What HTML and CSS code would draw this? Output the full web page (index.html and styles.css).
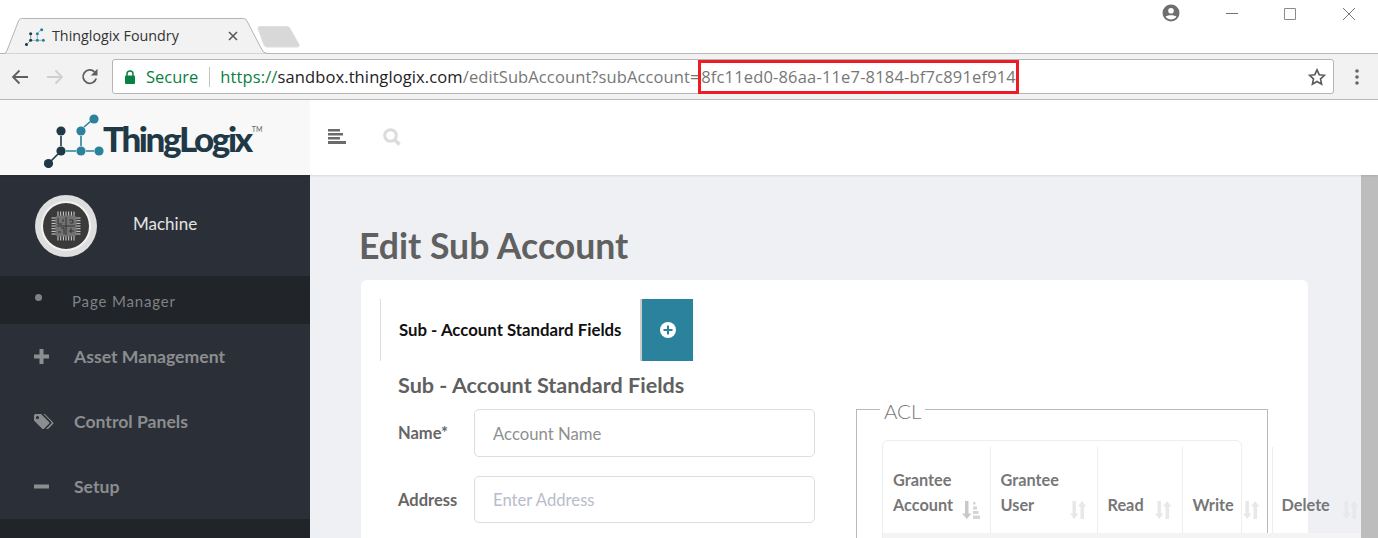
FILE: index.html
```html
<!DOCTYPE html>
<html lang="en">
<head>
<meta charset="utf-8">
<title>Thinglogix Foundry</title>
<link rel="stylesheet" href="styles.css">
</head>
<body>
<svg class="defs" width="0" height="0" aria-hidden="true">
  <defs>
    <symbol id="sort" viewBox="0 0 18 18">
      <path d="M3.500 0h3.500v12.500h2.500L5.200 18 1 12.500h2.500zM13 0l4.500 5.500H15V18h-3.500V5.500H9z"/>
    </symbol>
    <symbol id="sort-active" viewBox="0 0 18 18">
      <path class="sort-arrow" d="M3 0h3.500v12.500H9.500L4.800 18 0 12.500h3z"/>
      <path class="sort-bars" d="M11 1h2.500v2.500H11zM11 5.500h4v3h-4zM11 10h5.500v3H11zM11 14.500h7V18h-7z"/>
    </symbol>
    <symbol id="mark" viewBox="0 0 60 54">
      <g fill="none" stroke-width="1.600">
        <path stroke="#1f3a46" d="M17 22v10M14 40 7 47"/>
        <path stroke="#2a829c" d="M22 37h10M42 37h8M40 13l7-6M37 22v10"/>
      </g>
      <g fill="#1f3a46"><circle cx="17" cy="17" r="4.600"/><circle cx="17" cy="37" r="4.600"/><circle cx="4.500" cy="49.500" r="4.600"/></g>
      <g fill="#2a829c"><circle cx="37" cy="17" r="4.600"/><circle cx="50" cy="5" r="4.600"/><circle cx="37" cy="37" r="4.600"/><circle cx="55" cy="37" r="4.600"/></g>
    </symbol>
  </defs>
</svg>

<div class="tabstrip">
  <div class="tab">
    <svg class="tab-shape" width="268" height="36" viewBox="0 0 268 36"><path d="M0 35.500h4q2 0 3-3L18.500 3q1-2.500 3-2.500h222q2.500 0 3.500 2.500L261 30q2 5.500 6 5.500" fill="#f2f2f2" stroke="#b4b4b4"/></svg>
    <svg class="tab-icon" width="20" height="20"><use href="#mark"/></svg>
    <span class="tab-title">Thinglogix Foundry</span>
    <svg class="tab-close" width="10" height="10" viewBox="0 0 10 10"><path d="M1 1l8 8M9 1l-8 8" stroke="#5a5a5a" stroke-width="1.600"/></svg>
  </div>
  <svg class="newtab" width="44" height="22" viewBox="0 0 44 22"><path d="M1 2.500Q.5.500 3 .500h27q2 0 3 2l9 16q1 2.500-2 2.500H10q-2 0-3-2z" fill="#d8d8d8" stroke="#dedede"/></svg>
  <div class="window-controls">
    <svg class="profile" width="18" height="18" viewBox="0 0 18 18"><circle cx="9" cy="9" r="8.500" fill="#6e6e6e"/><circle cx="9" cy="6.700" r="2.800" fill="#fff"/><path d="M3.600 12.800C5 10.800 13 10.800 14.400 12.800 13 14.800 11 15.500 9 15.500S5 14.800 3.600 12.800z" fill="#fff"/></svg>
    <svg width="12" height="12" class="win-min" viewBox="0 0 12 12"><path d="M0 5.500h12" stroke="#707070"/></svg>
    <svg width="12" height="12" class="win-max" viewBox="0 0 12 12"><path d="M.5.500h11v11H.5z" fill="none" stroke="#8a8a8a"/></svg>
    <svg width="12" height="12" class="win-close" viewBox="0 0 12 12"><path d="M0 0l12 12M12 0L0 12" stroke="#777"/></svg>
  </div>
</div>

<div class="toolbar">
  <svg class="nav-icon" width="18" height="16" viewBox="0 0 18 16"><path d="M17 8H2M8.500 1.500 2 8l6.500 6.500" fill="none" stroke="#5f5f5f" stroke-width="1.800"/></svg>
  <svg class="nav-icon" width="18" height="16" viewBox="0 0 18 16"><path d="M1 8h15M9.500 1.500 16 8l-6.500 6.500" fill="none" stroke="#cfcfcf" stroke-width="1.800"/></svg>
  <svg class="nav-icon" width="18" height="18" viewBox="0 0 18 18"><path d="M15.200 10.500A6.700 6.700 0 1 1 13.500 3.800" fill="none" stroke="#5f5f5f" stroke-width="1.800"/><path d="M16.500.8v6.700H9.800z" fill="#5f5f5f"/></svg>
  <div class="omnibox">
    <svg class="lock" width="12" height="14" viewBox="0 0 12 14"><path d="M3 6V4a3 3 0 0 1 6 0v2" fill="none" stroke="#0b8043" stroke-width="1.500"/><rect x="1" y="5.500" width="10" height="8.500" rx="1" fill="#0b8043"/></svg>
    <span class="secure">Secure</span>
    <span class="omni-sep"></span>
    <span class="url"><span class="url-scheme">https://</span><span class="url-host">sandbox.thinglogix.com</span><span class="url-path">/editSubAccount?subAccount=</span><span class="url-id">8fc11ed0-86aa-11e7-8184-bf7c891ef914</span></span>
    <svg class="star" width="18" height="18" viewBox="0 0 18 18"><path d="M9 1.800l2.200 4.900 5.300.6-4 3.600 1.100 5.300L9 13.500l-4.600 2.700 1.100-5.300-4-3.600 5.300-.6z" fill="none" stroke="#5a5a5a" stroke-width="1.600"/></svg>
  </div>
  <svg class="kebab" width="4" height="16" viewBox="0 0 4 16"><circle cx="2" cy="2" r="1.800" fill="#666"/><circle cx="2" cy="8" r="1.800" fill="#666"/><circle cx="2" cy="14" r="1.800" fill="#666"/></svg>
</div>

<header class="app-header">
  <div class="brand">
    <svg class="brand-mark" width="60" height="54"><use href="#mark"/></svg>
    <span class="brand-name">ThingLogix</span><span class="brand-tm">TM</span>
  </div>
  <div class="header-tools">
    <svg width="18" height="15" viewBox="0 0 18 15"><path d="M0 0h12v2.500H0zM0 4h15v2.500H0zM0 8h12v2.500H0zM0 12h18v3H0z" fill="#6b6b6b"/></svg>
    <svg width="18" height="18" viewBox="0 0 18 18"><circle cx="7.500" cy="7.500" r="5.800" fill="none" stroke="#dcdcdc" stroke-width="3"/><path d="M11.500 11.500 16.500 16.500" stroke="#dcdcdc" stroke-width="3.400"/></svg>
  </div>
</header>

<div class="app-main">
  <aside class="sidebar">
    <div class="profile-row">
      <svg class="avatar" width="62" height="62" viewBox="0 0 62 62">
        <circle cx="31" cy="31" r="31" fill="#dedede"/>
        <circle cx="31" cy="31" r="24" fill="#3a3a3b" stroke="#f2f2f2" stroke-width="2"/>
        <g stroke="#e4e4e4" stroke-width=".9">
          <path d="M23 16.500v29M25.700 16.500v29M28.400 16.500v29M31 16.500v29M33.700 16.500v29M36.400 16.500v29M39 16.500v29M16.500 23h29M16.500 25.700h29M16.500 28.400h29M16.500 31h29M16.500 33.700h29M16.500 36.400h29M16.500 39h29"/>
        </g>
        <rect x="20.500" y="20.500" width="21" height="21" rx="3" fill="#727272"/>
        <path d="M23 23v6h4M26 33h3v6M31 22v18M22 31h18M34 25h4v3h-3M34 36h5M36 33v5M23 37h3M28 24v3" fill="none" stroke="#2e2e2e" stroke-width=".9"/>
      </svg>
      <span class="profile-name">Machine</span>
    </div>
    <a class="sub-item"><span class="bullet"></span><span class="sub-label">Page Manager</span></a>
    <a class="nav-item">
      <svg class="nav-glyph" width="15" height="15" viewBox="0 0 15 15"><path d="M5.500 0h4v5.500H15v4H9.500V15h-4V9.500H0v-4h5.500z" fill="#8c8d8f"/></svg>
      <span>Asset Management</span>
    </a>
    <a class="nav-item">
      <svg class="nav-glyph tags" width="20" height="15" viewBox="0 0 20 15"><path d="M0 1.500Q0 0 1.500 0H7l8 8q.8.900 0 1.800l-5 5q-.9.800-1.800 0L0 6.500zM3.500 2A1.600 1.600 0 1 0 3.500 5.200 1.600 1.600 0 0 0 3.500 2z" fill="#8c8d8f" fill-rule="evenodd"/><path d="M9.500 0h1.300l8.200 8.300q.8.900 0 1.700l-5 5h-2l5.300-5.400q.7-.7 0-1.500z" fill="#8c8d8f"/></svg>
      <span>Control Panels</span>
    </a>
    <a class="nav-item">
      <svg class="nav-glyph" width="15" height="15" viewBox="0 0 15 15"><path d="M0 5.500h15v4H0z" fill="#8c8d8f"/></svg>
      <span>Setup</span>
    </a>
    <div class="sidebar-rest"></div>
  </aside>

  <main class="content">
    <h1 class="page-title">Edit Sub Account</h1>
    <section class="card">
      <div class="tabs">
        <div class="tabs-item">Sub - Account Standard Fields</div>
        <div class="tabs-add">
          <svg width="16" height="16" viewBox="0 0 16 16"><circle cx="8" cy="8" r="8" fill="#fff"/><path d="M7 3.500h2V7h3.500v2H9v3.500H7V9H3.500V7H7z" fill="#2a829c"/></svg>
        </div>
      </div>
      <div class="section">
        <h2 class="section-title">Sub - Account Standard Fields</h2>
        <div class="columns">
          <form class="form">
            <div class="field field-name">
              <label class="field-label">Name*</label>
              <input class="field-input input-name" placeholder="Account Name">
            </div>
            <div class="field field-address">
              <label class="field-label">Address</label>
              <input class="field-input input-address" placeholder="Enter Address">
            </div>
          </form>
          <fieldset class="acl">
            <legend class="acl-legend">ACL</legend>
            <div class="acl-box">
              <table class="acl-table">
                <thead>
                  <tr>
                    <th class="col-account"><div class="th-inner"><span>Grantee<br>Account</span><svg class="sort-icon" width="18" height="18"><use href="#sort-active"/></svg></div></th>
                    <th class="col-user"><div class="th-inner"><span>Grantee<br>User</span><svg class="sort-icon" width="18" height="18"><use href="#sort"/></svg></div></th>
                    <th class="col-read"><div class="th-inner"><span>Read</span><svg class="sort-icon" width="18" height="18"><use href="#sort"/></svg></div></th>
                    <th class="col-write"><div class="th-inner"><span>Write</span><svg class="sort-icon" width="18" height="18"><use href="#sort"/></svg></div></th>
                    <th class="col-delete"><div class="th-inner"><span>Delete</span><svg class="sort-icon" width="18" height="18"><use href="#sort"/></svg></div></th>
                  </tr>
                </thead>
              </table>
            </div>
          </fieldset>
        </div>
      </div>
    </section>
  </main>
  <div class="scrollbar"></div>
</div>
</body>
</html>
```

FILE: styles.css
```css
* { box-sizing: border-box; }
html, body { margin: 0; height: 538px; overflow: hidden; background: #fff; }
body { font-family: "Lato", "Noto Sans", sans-serif; display: flex; flex-direction: column; }
.defs { position: absolute; }

/* browser chrome */
.tabstrip { height: 54px; flex: none; display: flex; align-items: flex-start; border-bottom: 1px solid #b9b9b9; position: relative; }
.tab { width: 268px; height: 36px; margin-top: 18px; position: relative; display: flex; align-items: center; padding: 0 30px 0 25px; z-index: 1; }
.tab-shape { position: absolute; left: 0; top: 0; }
.tab-icon, .tab-title, .tab-close { position: relative; }
.tab-icon { flex: none; margin-top: 1px; }
.tab-title { font-family: "Open Sans", sans-serif; font-size: 14.300px; line-height: 18px; padding-bottom: 1px; color: #333; margin-left: 7px; flex: 1; white-space: nowrap; }
.tab-close { flex: none; }
.newtab { flex: none; margin: 26px 0 0 -11px; }
.window-controls { margin-left: auto; display: flex; align-items: flex-start; padding: 4px 23px 0 0; }
.profile { margin-right: 46px; }
.win-min, .win-max, .win-close { margin-top: 4px; }
.win-max { margin: 4px 47px 0 46px; }

.toolbar { height: 46px; flex: none; background: #f2f2f2; border-bottom: 1px solid #b9b9b9; display: flex; align-items: center; padding: 0 19px 0 11px; }
.nav-icon { flex: none; margin-right: 17px; }
.nav-icon:nth-child(3) { margin-right: 13px; }
.omnibox { flex: 1; height: 35px; margin-right: 21px; background: #fff; border: 1px solid #b5b5b5; border-radius: 3px; display: flex; align-items: center; padding: 0 7px 0 11px; font-family: "Open Sans", sans-serif; font-size: 16.500px; white-space: nowrap; }
.lock { flex: none; margin-right: 10px; }
.secure { color: #0b8043; }
.omni-sep { width: 1px; height: 20px; background: #c4c4c4; margin: 0 10px 0 11px; }
.url { flex: 1; display: flex; align-items: center; color: #777; letter-spacing: .11px; }
.url-scheme { color: #0b8043; }
.url-host { color: #222; }
.url-id { height: 34px; line-height: 28px; border: 3px solid #ed1c24; margin-left: -2px; padding: 0 0 0 .5px; letter-spacing: .17px; }
.star { flex: none; }
.kebab { flex: none; }

/* app */
.app-header { height: 75px; flex: none; display: flex; background: #fff; box-shadow: 0 1px 2px rgba(0,0,0,.1); position: relative; z-index: 1; }
.brand { width: 310px; background: #f8f8f8; display: flex; align-items: flex-start; padding: 14px 0 0 44px; }
.brand-mark { flex: none; }
.brand-name { font-size: 35px; font-weight: 900; letter-spacing: -2.400px; color: #1f3a46; line-height: 46px; margin: 1px 0 0 -1px; }
.brand-tm { font-size: 7px; color: #666; margin: 11px 0 0 1px; }
.header-tools { display: flex; align-items: center; gap: 37px; padding-left: 18px; margin-top: -1px; height: 75px; }

.app-main { flex: 1; min-height: 0; display: flex; overflow: hidden; }
.sidebar { width: 310px; flex: none; background: #2b3038; display: flex; flex-direction: column; }
.profile-row { height: 101px; display: flex; align-items: center; padding: 0 0 0 35px; }
.avatar { flex: none; }
.profile-name { color: #e4e4e4; font-size: 17px; margin: -5px 0 0 36px; }
.sub-item { height: 48px; background: #212428; display: flex; align-items: center; color: #808285; font-size: 15px; letter-spacing: .85px; padding-left: 35px; }
.sub-label { padding-top: 2px; }
.bullet { width: 7px; height: 7px; border-radius: 50%; background: #808285; margin: -6px 30px 0 0; }
.nav-item { height: 65px; display: flex; align-items: center; font-size: 17.600px; font-weight: 700; color: #8c8d8f; padding-left: 34px; flex: none; }
.nav-glyph { flex: none; margin-right: 25px; }
.nav-glyph.tags { margin-right: 20px; }
.sidebar-rest { flex: 1; background: #212428; }

.content { flex: 1; min-width: 0; background: #eef0f4; padding: 0 0 0 49px; overflow: hidden; }
.page-title { margin: 50px 0 0; font-size: 35.600px; line-height: 42px; font-weight: 700; color: #606060; }
.card { margin: 13px 0 0 2px; width: 947px; height: 400px; background: #fff; border-radius: 6px; padding: 19px 0 0 19px; }
.tabs { display: flex; height: 62px; }
.tabs-item { width: 260px; border-left: 1px solid #ddd; display: flex; align-items: center; padding: 0 0 2px 18px; font-size: 16.800px; font-weight: 700; color: #111; }
.tabs-add { width: 53px; background: #2a829c; border-left: 2px solid #ccc; display: flex; align-items: center; justify-content: center; }
.section { padding: 0 0 0 18px; }
.section-title { margin: 10px 0 0; font-size: 21.600px; line-height: 28px; font-weight: 700; color: #606060; }
.columns { display: flex; margin-top: 10px; }
.form { width: 417px; flex: none; }
.field { display: flex; }
.field-address { margin-top: 19px; align-items: center; }
.field-label { width: 76px; font-size: 16.500px; font-weight: 700; color: #666; flex: none; }
.field-name .field-label { padding-top: 14px; }
.field-input { width: 341px; height: 48px; border: 1px solid #dcdde2; border-radius: 5px; padding: 0 18px; font-family: inherit; font-size: 16.700px; background: #fff; outline: none; }
.input-name { padding-top: 2px; }
.input-name::placeholder { color: #8f8f8f; opacity: 1; }
.input-address { height: 47px; }
.input-address::placeholder { color: #b9bccb; opacity: 1; }

.acl { width: 412px; height: 200px; flex: none; margin: -15px 0 0 41px; padding: 0 0 0 25px; border: 1px solid #b9b9b9; min-width: 0; }
.acl-legend { margin-left: -2px; padding: 4px 4px 0; font-size: 20.500px; line-height: 26px; font-weight: 300; color: #777; }
.acl-box { width: 360px; height: 200px; margin-top: 16px; border: 1px solid #eeeeee; border-radius: 6px 6px 0 0; padding-top: 6px; }
.acl-table { border-collapse: collapse; table-layout: fixed; width: 479px; }
.acl-table th { height: 86px; padding: 0 10px 16px 10px; vertical-align: bottom; text-align: left; font-size: 16.300px; line-height: 25px; font-weight: 700; color: #777; border-left: 1px solid #eee; border-bottom: 0; }
.acl-table th:first-child { border-left: 0; }
.col-account, .col-user { width: 107px; }
.col-read { width: 85px; }
.col-write { width: 90px; }
.col-delete { width: 90px; }
.acl-table th.col-write { padding-right: 12px; }
.acl-table th.col-delete { padding: 0 3px 16px 9px; }
.th-inner { display: flex; justify-content: space-between; align-items: flex-end; }
.sort-icon { flex: none; fill: #e8e8e8; margin-bottom: -2px; }
.sort-arrow { fill: #c9c9c9; }
.sort-bars { fill: #d5d5d5; }
.acl-box::after { content: ""; display: block; width: 478px; height: 6px; background: #f4f4f4; }
.scrollbar { width: 17px; flex: none; background: #bdbdbd; }
```
